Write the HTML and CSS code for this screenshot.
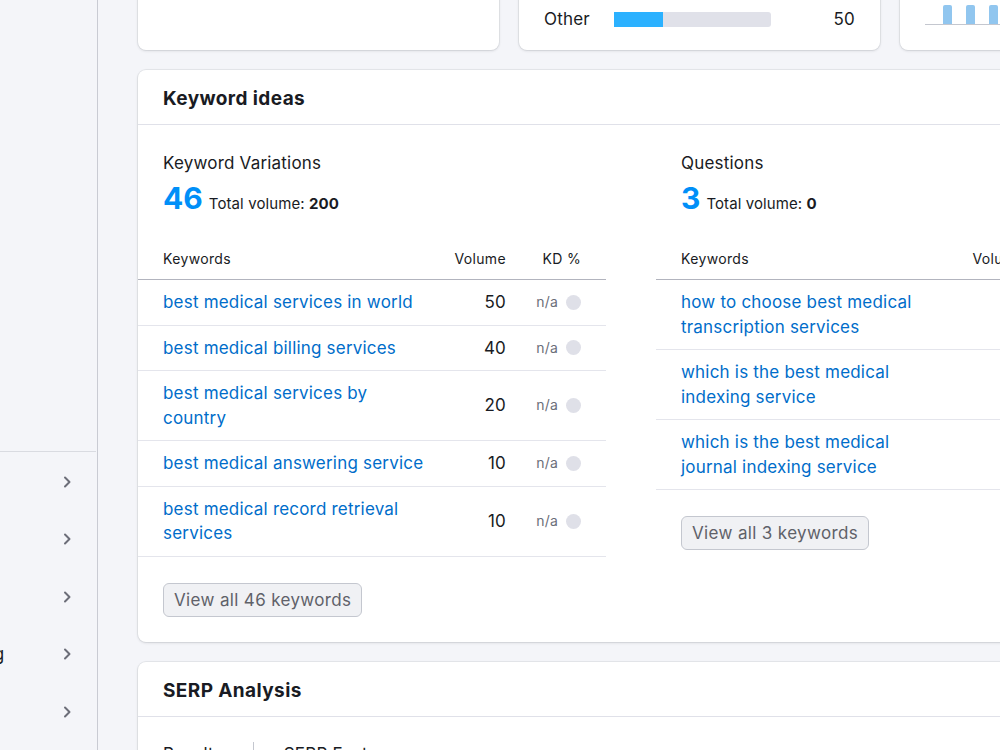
FILE: index.html
```html
<!DOCTYPE html>
<html lang="en">
<head>
<meta charset="utf-8">
<title>Keyword Overview</title>
<link rel="stylesheet" href="styles.css">
</head>
<body>
<div class="page">
  <aside class="sidebar">
    <div class="nav-spacer"></div>
    <nav class="nav">
      <div class="nav-item"><span class="nav-label"></span><svg class="chev" viewBox="0 0 16 16"><path d="M6 3.5l4.5 4.5L6 12.5"/></svg></div>
      <div class="nav-item"><span class="nav-label"></span><svg class="chev" viewBox="0 0 16 16"><path d="M6 3.5l4.5 4.5L6 12.5"/></svg></div>
      <div class="nav-item"><span class="nav-label"></span><svg class="chev" viewBox="0 0 16 16"><path d="M6 3.5l4.5 4.5L6 12.5"/></svg></div>
      <div class="nav-item"><span class="nav-label shifted">Marketing</span><svg class="chev" viewBox="0 0 16 16"><path d="M6 3.5l4.5 4.5L6 12.5"/></svg></div>
      <div class="nav-item"><span class="nav-label"></span><svg class="chev" viewBox="0 0 16 16"><path d="M6 3.5l4.5 4.5L6 12.5"/></svg></div>
    </nav>
  </aside>

  <main class="main">
    <div class="top-row">
      <section class="card top-card"></section>
      <section class="card top-card">
        <div class="dist-row">
          <span class="dist-label">Other</span>
          <span class="dist-bar"><span class="dist-fill" style="width:31%"></span></span>
          <span class="dist-value">50</span>
        </div>
      </section>
      <section class="card top-card">
        <div class="mini-chart">
          <span class="mini-bar"></span>
          <span class="mini-bar"></span>
          <span class="mini-bar"></span>
          <span class="mini-bar"></span>
          <span class="mini-bar"></span>
        </div>
      </section>
    </div>

    <section class="card">
      <header class="card-head"><h2>Keyword ideas</h2></header>
      <div class="ideas">
        <div class="idea-col">
          <div class="idea-summary">
            <div class="idea-title">Keyword Variations</div>
            <div class="idea-stats"><span class="big-num">46</span><span class="total">Total volume: <b>200</b></span></div>
          </div>
          <table class="kw-table">
            <colgroup><col class="c-kw"><col class="c-vol"><col class="c-kd"></colgroup>
            <thead>
              <tr><th class="kw">Keywords</th><th class="vol">Volume</th><th class="kd">KD %</th></tr>
            </thead>
            <tbody>
              <tr><td class="kw"><a href="#">best medical services in world</a></td><td class="vol">50</td><td class="kd"><div class="kd-cell"><span class="na">n/a</span><span class="dot"></span></div></td></tr>
              <tr><td class="kw"><a href="#">best medical billing services</a></td><td class="vol">40</td><td class="kd"><div class="kd-cell"><span class="na">n/a</span><span class="dot"></span></div></td></tr>
              <tr><td class="kw"><a href="#">best medical services by country</a></td><td class="vol">20</td><td class="kd"><div class="kd-cell"><span class="na">n/a</span><span class="dot"></span></div></td></tr>
              <tr><td class="kw"><a href="#">best medical answering service</a></td><td class="vol">10</td><td class="kd"><div class="kd-cell"><span class="na">n/a</span><span class="dot"></span></div></td></tr>
              <tr><td class="kw"><a href="#">best medical record retrieval services</a></td><td class="vol">10</td><td class="kd"><div class="kd-cell"><span class="na">n/a</span><span class="dot"></span></div></td></tr>
            </tbody>
          </table>
          <div class="col-foot"><button class="btn">View all 46 keywords</button></div>
        </div>

        <div class="idea-col">
          <div class="idea-summary">
            <div class="idea-title">Questions</div>
            <div class="idea-stats"><span class="big-num">3</span><span class="total">Total volume: <b>0</b></span></div>
          </div>
          <table class="kw-table">
            <colgroup><col class="c-kw"><col class="c-vol"><col class="c-kd"></colgroup>
            <thead>
              <tr><th class="kw">Keywords</th><th class="vol">Volume</th><th class="kd">KD %</th></tr>
            </thead>
            <tbody>
              <tr><td class="kw"><a href="#">how to choose best medical transcription services</a></td><td class="vol">0</td><td class="kd"><div class="kd-cell"><span class="na">n/a</span><span class="dot"></span></div></td></tr>
              <tr><td class="kw"><a href="#">which is the best medical indexing service</a></td><td class="vol">0</td><td class="kd"><div class="kd-cell"><span class="na">n/a</span><span class="dot"></span></div></td></tr>
              <tr><td class="kw"><a href="#">which is the best medical journal indexing service</a></td><td class="vol">0</td><td class="kd"><div class="kd-cell"><span class="na">n/a</span><span class="dot"></span></div></td></tr>
            </tbody>
          </table>
          <div class="col-foot"><button class="btn">View all 3 keywords</button></div>
        </div>
      </div>
    </section>

    <section class="card">
      <header class="card-head"><h2>SERP Analysis</h2></header>
      <div class="serp-body">
        <div class="tabs">
          <span class="tab">Results</span>
          <span class="tab tab-second">SERP Features</span>
        </div>
      </div>
    </section>
  </main>
</div>
</body>
</html>
```

FILE: styles.css
```css
* { box-sizing: border-box; }

html, body {
  margin: 0;
  padding: 0;
  width: 1000px;
  height: 750px;
  overflow: hidden;
  background: #f4f5f9;
  font-family: Inter, "Noto Sans", "Liberation Sans", sans-serif;
  color: #191b23;
}

.page {
  display: flex;
  align-items: flex-start;
  min-height: 750px;
}

/* Sidebar */
.sidebar {
  flex: none;
  width: 98px;
  height: 750px;
  border-right: 1px solid #c9cbd3;
  background: #f4f5f9;
  display: flex;
  flex-direction: column;
}

.nav-spacer {
  height: 452px;
  border-bottom: 1px solid #d9dbe1;
  margin-right: 1px;
}

.nav {
  display: flex;
  flex-direction: column;
  padding-top: 1px;
}

.nav-item {
  height: 57.5px;
  display: flex;
  align-items: center;
  justify-content: space-between;
  padding-right: 22px;
}

.nav-label {
  font-size: 17px;
  letter-spacing: 0.2px;
  color: #191b23;
  white-space: nowrap;
}

.nav-label.shifted {
  margin-left: -78px;
}

.chev {
  width: 16px;
  height: 16px;
  fill: none;
  stroke: #6c6e79;
  stroke-width: 2;
  stroke-linecap: round;
  stroke-linejoin: round;
}

/* Main */
.main {
  flex: none;
  width: 1163px;
  padding-left: 40px;
  display: flex;
  flex-direction: column;
  gap: 20px;
}

.card {
  background: #fff;
  border-radius: 8px;
  box-shadow: 0 0 0 1px rgba(25, 27, 35, 0.06), 0 1px 3px rgba(25, 27, 35, 0.12);
}

.top-row {
  display: flex;
  gap: 20px;
  margin-top: -80px;
}

.top-card {
  flex: 1;
  height: 130px;
  display: flex;
  flex-direction: column;
  justify-content: flex-end;
  padding: 0 25px 19px;
}

.dist-row {
  display: flex;
  align-items: center;
  height: 24px;
  font-size: 17px;
  letter-spacing: 0.2px;
  color: #191b23;
}

.dist-label {
  width: 70px;
}

.dist-bar {
  width: 157px;
  height: 15px;
  background: #e0e1e9;
  border-radius: 0 3px 3px 0;
  overflow: hidden;
  display: flex;
}

.dist-fill {
  background: #2bb1ff;
  height: 100%;
}

.dist-value {
  margin-left: auto;
}

.top-card:last-child {
  padding-bottom: 20px;
}

.mini-chart {
  display: flex;
  align-items: flex-end;
  gap: 14px;
  height: 20px;
  border-bottom: 1px solid #c4c7cf;
  padding-left: 18px;
  margin-bottom: 5px;
}

.mini-bar {
  width: 9px;
  height: 19px;
  background: #91c6ef;
  border-radius: 2px 2px 0 0;
}

/* Card header */
.card-head {
  height: 55px;
  padding: 17px 25px 0;
  border-bottom: 1px solid #e0e1e9;
}

.card-head h2 {
  margin: 0;
  font-size: 19px;
  letter-spacing: 0.4px;
  line-height: 24px;
  font-weight: 700;
  color: #191b23;
}

/* Keyword ideas */
.ideas {
  display: flex;
  gap: 50px;
  padding-bottom: 25px;
}

.idea-col {
  width: 468px;
  flex: none;
}

.idea-summary {
  padding: 26px 25px 0;
}

.idea-title {
  font-size: 17px;
  letter-spacing: 0.2px;
  line-height: 24px;
  color: #191b23;
}

.idea-stats {
  display: flex;
  align-items: baseline;
  margin-top: 5px;
  height: 36px;
}

.big-num {
  font-size: 30px;
  line-height: 36px;
  font-weight: 700;
  color: #008ff8;
  margin-right: 6px;
}

.total {
  font-size: 15px;
  letter-spacing: 0.1px;
  color: #191b23;
}

.total b {
  font-weight: 700;
}

.kw-table {
  width: 468px;
  margin-top: 24px;
  border-collapse: collapse;
  table-layout: fixed;
}

.c-kw { width: 300px; }
.c-vol { width: 68px; }
.c-kd { width: 100px; }

.kw-table th {
  font-size: 14px;
  letter-spacing: 0.35px;
  line-height: 20px;
  font-weight: 400;
  color: #191b23;
  padding: 9px 0 10px;
  border-bottom: 1px solid #b2b4be;
}

.kw-table td {
  font-size: 17px;
  letter-spacing: 0.2px;
  line-height: 24.5px;
  padding: 10px 0;
  border-bottom: 1px solid #e4e5ec;
  vertical-align: middle;
}

.kw-table .kw {
  text-align: left;
  padding-left: 25px;
  padding-right: 10px;
}

.kw-table .vol {
  text-align: right;
  color: #191b23;
}

.kw-table .kd {
  text-align: right;
  padding-right: 25px;
}

.kd-cell {
  display: flex;
  justify-content: flex-end;
  align-items: center;
  height: 24px;
}

.kw-table a {
  color: #006dca;
  text-decoration: none;
}

.na {
  font-size: 14px;
  letter-spacing: 0.2px;
  color: #6c6e79;
}

.dot {
  flex: none;
  width: 15px;
  height: 15px;
  border-radius: 50%;
  background: #dfe0e8;
  margin-left: 8px;
}

.col-foot {
  padding: 26px 25px 0;
}

.btn {
  font-family: inherit;
  font-size: 17px;
  letter-spacing: 0.35px;
  line-height: 22px;
  height: 34px;
  padding: 5px 10px;
  color: #5f6169;
  background: #f0f1f4;
  border: 1px solid #c4c7cf;
  border-radius: 6px;
  cursor: pointer;
}

/* SERP */
.serp-body {
  padding: 25px 25px 40px;
}

.tabs {
  display: flex;
  font-size: 17px;
  letter-spacing: 0.2px;
  line-height: 24px;
}

.tab {
  padding-right: 30px;
}

.tab-second {
  border-left: 1px solid #c4c7cf;
  padding-left: 30px;
}
```
